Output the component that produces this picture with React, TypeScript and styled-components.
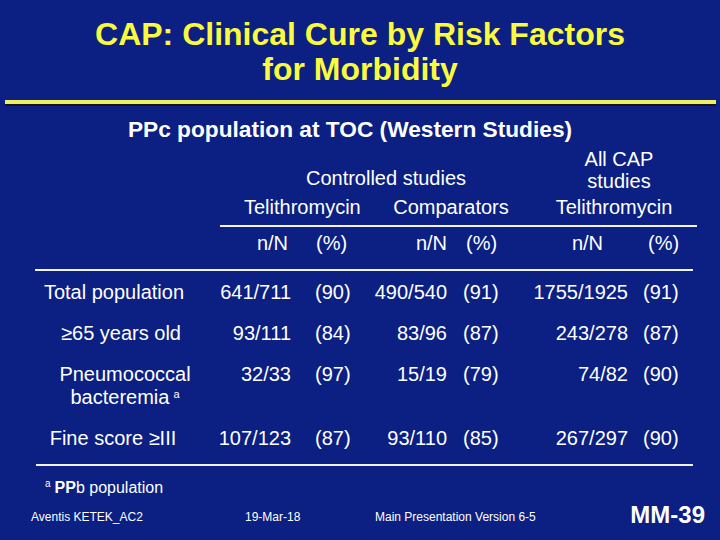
import React from "react";
import styled, { createGlobalStyle } from "styled-components";

const GlobalStyle = createGlobalStyle`
  html, body {
    margin: 0;
    padding: 0;
    background: #0b2082;
  }
`;

const Slide = styled.div`
  width: 720px;
  height: 540px;
  overflow: hidden;
  background: #0b2082;
  color: #ffffff;
  font-family: "Liberation Sans", Arial, sans-serif;
  display: flex;
  flex-direction: column;
  box-sizing: border-box;
`;

const Title = styled.h1`
  margin: 17px 0 0;
  font-size: 32px;
  line-height: 35px;
  font-weight: bold;
  color: #fafa3e;
  text-align: center;
`;

const YellowRule = styled.div`
  height: 4px;
  margin: 13px 4px 0 5px;
  background: #eef064;
  box-shadow: 0 2px 0 #141414;
`;

const Subtitle = styled.h2`
  margin: 12px 20px 0 0;
  font-size: 22.7px;
  line-height: 26px;
  font-weight: bold;
  text-align: center;
  color: #ffffff;
`;

const Table = styled.div`
  display: flex;
  flex-direction: column;
  padding-left: 30px;
  font-size: 20px;
  line-height: 23px;
`;

const Row = styled.div<{ $top?: number; $bottom?: number }>`
  display: grid;
  grid-template-columns: 176px 85px 69px 87px 73px 108px 72px;
  margin-top: ${(p) => p.$top ?? 0}px;
  padding-bottom: ${(p) => p.$bottom ?? 0}px;
  align-items: end;
`;

const GroupHead = styled.div<{ $span: string; $shift: number; $lift?: number }>`
  grid-column: ${(p) => p.$span};
  text-align: center;
  padding-left: ${(p) => p.$shift}px;
  padding-bottom: ${(p) => p.$lift ?? 0}px;
  line-height: 22px;
`;

const Label = styled.div<{ $shift?: number }>`
  grid-column: 1;
  text-align: center;
  align-self: start;
  padding-left: ${(p) => Math.max(p.$shift ?? 0, 0) * 2}px;
  padding-right: ${(p) => Math.max(-(p.$shift ?? 0), 0) * 2}px;
`;

const Num = styled.div<{ $pad?: number }>`
  text-align: right;
  padding-right: ${(p) => p.$pad ?? 0}px;
  align-self: start;
`;

const Pct = styled.div<{ $pad: number }>`
  text-align: left;
  padding-left: ${(p) => p.$pad}px;
  align-self: start;
`;

const Rule = styled.div<{ $top: number; $left: number; $right: number }>`
  height: 2px;
  background: #f2f2f2;
  margin: ${(p) => p.$top}px ${(p) => p.$right}px 0 ${(p) => p.$left}px;
`;

const Sup = styled.sup`
  font-size: 11px;
  vertical-align: 6px;
  line-height: 0;
  margin-left: 4px;
`;

const Footnote = styled.div`
  margin: 12px 0 0 45px;
  font-size: 16px;
  line-height: 19px;
  b {
    font-weight: bold;
  }
  sup {
    font-size: 10px;
    vertical-align: 6px;
    line-height: 0;
    margin-right: 4px;
  }
`;

const Footer = styled.div`
  display: grid;
  grid-template-columns: 214px 130px 1fr auto;
  align-items: center;
  margin: 9px 15px 0 31px;
  font-size: 12px;
  line-height: 22px;
`;

const SlideNo = styled.div`
  font-size: 24px;
  font-weight: bold;
  line-height: 22px;
  margin-top: -5px;
`;

type DataRow = {
  label: React.ReactNode;
  shift: number;
  values: [string, string, string, string, string, string];
  bottom: number;
};

const rows: DataRow[] = [
  { label: "Total population", shift: -4, values: ["641/711", "(90)", "490/540", "(91)", "1755/1925", "(91)"], bottom: 18 },
  { label: "\u226565 years old", shift: 3, values: ["93/111", "(84)", "83/96", "(87)", "243/278", "(87)"], bottom: 18 },
  {
    label: (
      <>
        Pneumococcal
        <br />
        bacteremia<Sup>a</Sup>
      </>
    ),
    shift: 7,
    values: ["32/33", "(97)", "15/19", "(79)", "74/82", "(90)"],
    bottom: 18,
  },
  { label: "Fine score \u2265III", shift: -5, values: ["107/123", "(87)", "93/110", "(85)", "267/297", "(90)"], bottom: 0 },
];

export default function App() {
  return (
    <>
      <GlobalStyle />
      <Slide>
        <Title>
          CAP: Clinical Cure by Risk Factors
          <br />
          for Morbidity
        </Title>
        <YellowRule />
        <Subtitle>PPc population at TOC (Western Studies)</Subtitle>

        <Table>
          <Row $top={6}>
            <GroupHead $span="2 / 6" $shift={46} $lift={3}>Controlled studies</GroupHead>
            <GroupHead $span="6 / 8" $shift={18}>
              All CAP
              <br />
              studies
            </GroupHead>
          </Row>
          <Row $top={4}>
            <GroupHead $span="2 / 4" $shift={38}>Telithromycin</GroupHead>
            <GroupHead $span="4 / 6" $shift={22}>Comparators</GroupHead>
            <GroupHead $span="6 / 8" $shift={8}>Telithromycin</GroupHead>
          </Row>
          <Rule $top={7} $left={190} $right={23} />
          <Row $top={5}>
            <Label />
            <Num $pad={3}>n/N</Num>
            <Pct $pad={25}>(%)</Pct>
            <Num>n/N</Num>
            <Pct $pad={19}>(%)</Pct>
            <Num $pad={25}>n/N</Num>
            <Pct $pad={20}>(%)</Pct>
          </Row>
          <Rule $top={14} $left={5} $right={27} />
          {rows.map((r, i) => (
            <Row key={i} $top={i === 0 ? 10 : 0} $bottom={r.bottom}>
              <Label $shift={r.shift}>{r.label}</Label>
              <Num>{r.values[0]}</Num>
              <Pct $pad={24}>{r.values[1]}</Pct>
              <Num>{r.values[2]}</Num>
              <Pct $pad={16}>{r.values[3]}</Pct>
              <Num>{r.values[4]}</Num>
              <Pct $pad={15}>{r.values[5]}</Pct>
            </Row>
          ))}
          <Rule $top={14} $left={6} $right={27} />
        </Table>

        <Footnote>
          <sup>a</sup>
          <b>PP</b>b population
        </Footnote>

        <Footer>
          <div>Aventis KETEK_AC2</div>
          <div>19-Mar-18</div>
          <div>Main Presentation Version 6-5</div>
          <SlideNo>MM-39</SlideNo>
        </Footer>
      </Slide>
    </>
  );
}
